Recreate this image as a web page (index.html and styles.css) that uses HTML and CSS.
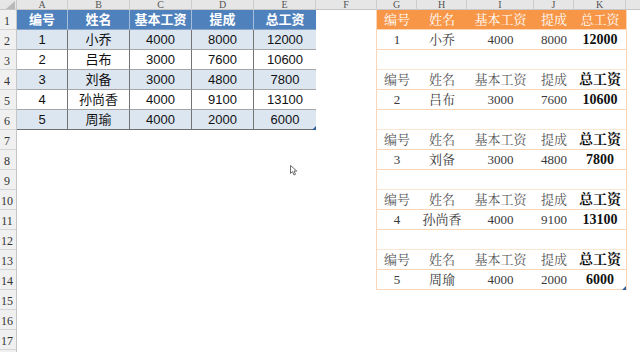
FILE: index.html
```html
<!DOCTYPE html>
<html lang="zh">
<head>
<meta charset="utf-8">
<link rel="stylesheet" href="styles.css">
</head>
<body>
<div class="sheet">
  <div class="colhead">
    <div class="corner"><svg width="17" height="10" viewBox="0 0 17 10"><polygon points="15,1 15,9 6,9" fill="#b9b9b9"/></svg></div>
    <div class="ch c-a">A</div>
    <div class="ch c-b">B</div>
    <div class="ch c-b">C</div>
    <div class="ch c-b">D</div>
    <div class="ch c-b">E</div>
    <div class="ch c-f">F</div>
    <div class="ch c-g">G</div>
    <div class="ch c-h">H</div>
    <div class="ch c-i">I</div>
    <div class="ch c-g">J</div>
    <div class="ch c-k">K</div>
    <div class="ch c-rest"></div>
  </div>
  <div class="body">
    <div class="rowhead">
      <div class="rh">1</div><div class="rh">2</div><div class="rh">3</div><div class="rh">4</div>
      <div class="rh">5</div><div class="rh">6</div><div class="rh">7</div><div class="rh">8</div>
      <div class="rh">9</div><div class="rh">10</div><div class="rh">11</div><div class="rh">12</div>
      <div class="rh">13</div><div class="rh">14</div><div class="rh">15</div><div class="rh">16</div>
      <div class="rh">17</div><div class="rh"></div>
    </div>

    <div class="left">
      <div class="lt hd">编号</div><div class="lt hd">姓名</div><div class="lt hd">基本工资</div><div class="lt hd">提成</div><div class="lt hd last">总工资</div>
      <div class="lt band">1</div><div class="lt band">小乔</div><div class="lt band">4000</div><div class="lt band">8000</div><div class="lt band last">12000</div>
      <div class="lt">2</div><div class="lt">吕布</div><div class="lt">3000</div><div class="lt">7600</div><div class="lt last">10600</div>
      <div class="lt band">3</div><div class="lt band">刘备</div><div class="lt band">3000</div><div class="lt band">4800</div><div class="lt band last">7800</div>
      <div class="lt">4</div><div class="lt">孙尚香</div><div class="lt">4000</div><div class="lt">9100</div><div class="lt last">13100</div>
      <div class="lt band bot">5</div><div class="lt band bot">周瑜</div><div class="lt band bot">4000</div><div class="lt band bot">2000</div><div class="lt band bot last">6000<span class="handle"></span></div>
    </div>

    <div class="colf"></div>

    <div class="right">
      <div class="rt top">编号</div><div class="rt top">姓名</div><div class="rt top">基本工资</div><div class="rt top">提成</div><div class="rt top">总工资</div>
      <div class="rt">1</div><div class="rt">小乔</div><div class="rt">4000</div><div class="rt">8000</div><div class="rt tot">12000</div>
      <div class="rt blank"></div>
      <div class="rt sub">编号</div><div class="rt sub">姓名</div><div class="rt sub">基本工资</div><div class="rt sub">提成</div><div class="rt tot">总工资</div>
      <div class="rt">2</div><div class="rt">吕布</div><div class="rt">3000</div><div class="rt">7600</div><div class="rt tot">10600</div>
      <div class="rt blank"></div>
      <div class="rt sub">编号</div><div class="rt sub">姓名</div><div class="rt sub">基本工资</div><div class="rt sub">提成</div><div class="rt tot">总工资</div>
      <div class="rt">3</div><div class="rt">刘备</div><div class="rt">3000</div><div class="rt">4800</div><div class="rt tot">7800</div>
      <div class="rt blank"></div>
      <div class="rt sub">编号</div><div class="rt sub">姓名</div><div class="rt sub">基本工资</div><div class="rt sub">提成</div><div class="rt tot">总工资</div>
      <div class="rt">4</div><div class="rt">孙尚香</div><div class="rt">4000</div><div class="rt">9100</div><div class="rt tot">13100</div>
      <div class="rt blank"></div>
      <div class="rt sub">编号</div><div class="rt sub">姓名</div><div class="rt sub">基本工资</div><div class="rt sub">提成</div><div class="rt tot">总工资</div>
      <div class="rt">5</div><div class="rt">周瑜</div><div class="rt">4000</div><div class="rt">2000</div><div class="rt tot">6000<span class="handle"></span></div>
    </div>
  </div>
  <svg class="cursor" width="8" height="11" viewBox="0 0 8 11"><path d="M0.5 0.5 L0.5 8.5 L2.5 6.5 L4 10 L5.5 9.3 L4 6 L6.8 6 Z" fill="#fff" stroke="#6a6a6a" stroke-width="1" stroke-linejoin="round"/></svg>
</div>
</body>
</html>
```

FILE: styles.css
```css
* { box-sizing: border-box; }
html, body { margin: 0; padding: 0; background: #fff; }
.sheet {
  position: relative;
  width: 640px;
  height: 352px;
  overflow: hidden;
  background: #fff;
}
.colhead {
  display: flex;
  height: 10px;
  background: #e6e6e6;
  border-bottom: 1px solid #c6c6c6;
}
.corner { width: 17px; height: 10px; border-right: 1px solid #c6c6c6; }
.corner svg { display: block; }
.ch {
  height: 10px;
  border-right: 1px solid #cdcdcd;
  font-family: "Liberation Serif", serif;
  font-size: 10px;
  line-height: 10px;
  color: #555;
  text-align: center;
}
.c-a { width: 51px; }
.c-b { width: 62px; }
.c-f { width: 61px; }
.c-g { width: 40px; }
.c-h { width: 50px; }
.c-i { width: 67px; }
.c-k { width: 52px; }
.c-rest { flex: 1; border-right: 0; }

.body { display: flex; align-items: flex-start; }
.rowhead {
  width: 17px;
  display: flex;
  flex-direction: column;
  background: #f0f0f0;
  border-right: 1px solid #c6c6c6;
}
.rh {
  height: 20px;
  border-bottom: 1px solid #d6d6d6;
  font-family: "Liberation Serif", serif;
  font-size: 12px;
  line-height: 22px;
  color: #333;
  text-align: center;
  padding-right: 2px;
}

.left {
  display: grid;
  grid-template-columns: 51px 62px 62px 62px 62px;
  grid-auto-rows: 20px;
  width: 299px;
}
.lt {
  position: relative;
  font-family: "Liberation Sans", "Noto Sans CJK SC", sans-serif;
  font-size: 13px;
  line-height: 19px;
  text-align: center;
  color: #111;
  background: #fff;
  border-right: 1px solid #737373;
  border-bottom: 1px solid #a6a6a6;
}
.lt.last { border-right: 0; }
.lt.hd {
  background: #4f81bd;
  color: #fff;
  font-weight: bold;
  border-right-color: #a7bedb;
  border-bottom-color: #8aa4c8;
}
.lt.hd.last { border-right: 0; }
.lt.band { background: #dce6f1; }
.lt.bot { border-bottom-color: #6f6f6f; }

.colf { width: 61px; flex: none; }

.right {
  display: grid;
  grid-template-columns: 40px 50px 67px 40px 52px;
  grid-auto-rows: 20px;
  width: 249px;
  border-left: 1px solid #fbd5b8;
  border-right: 1px solid #fbd5b8;
  box-sizing: content-box;
  margin-left: -1px;
}
.rt {
  position: relative;
  font-family: "Liberation Serif", "Noto Serif CJK SC", "Noto Sans CJK SC", serif;
  font-size: 13px;
  line-height: 20px;
  text-align: center;
  color: #3a3a3a;
  border-bottom: 1px solid #fbd5b8;
}
.rt.top {
  background: #f79646;
  color: #fff;
  border-bottom-color: #fbd5b8;
}
.rt.sub { color: #555; }
.rt.tot { font-weight: bold; color: #111; font-size: 14px; }
.rt.top:last-child { font-weight: normal; }
.rt.blank { grid-column: 1 / -1; border-bottom-color: #fde6cf; }

.handle {
  position: absolute;
  right: 0;
  bottom: -1px;
  width: 0;
  height: 0;
  border-left: 4px solid transparent;
  border-bottom: 4px solid #2f5f9e;
}

.cursor {
  position: absolute;
  left: 290px;
  top: 165px;
}
```
